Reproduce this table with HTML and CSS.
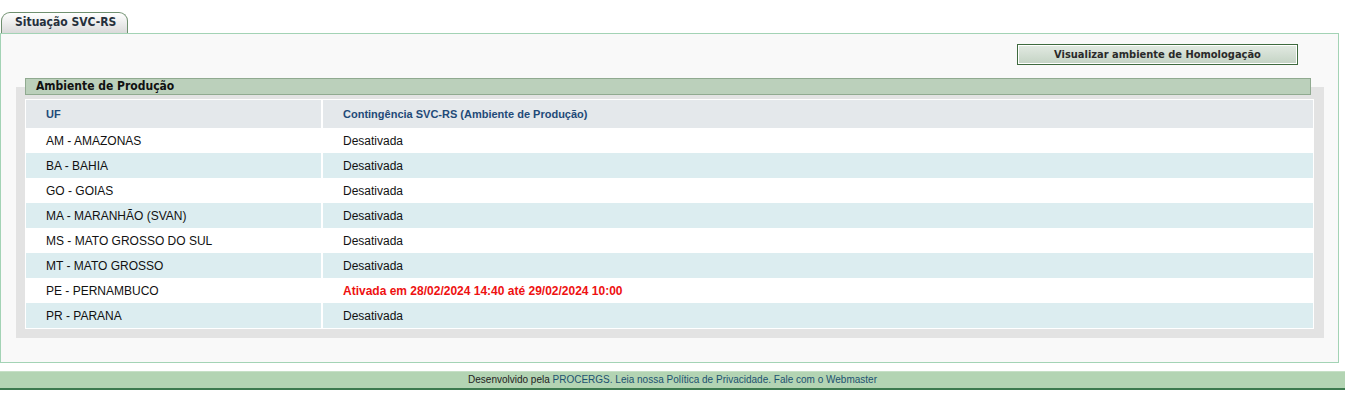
FILE: index.html
```html
<!DOCTYPE html>
<html lang="pt-BR">
<head>
<meta charset="utf-8">
<title>Situação SVC-RS</title>
<link rel="stylesheet" href="styles.css">
</head>
<body>
<div class="page">
  <div class="tab">Situação SVC-RS</div>
  <div class="panel">
    <div class="actions">
      <button class="btn" type="button">Visualizar ambiente de Homologação</button>
    </div>
    <div class="section">
      <div class="section-title">Ambiente de Produção</div>
      <table class="grid">
        <thead>
          <tr><th class="c1">UF</th><th>Contingência SVC-RS (Ambiente de Produção)</th></tr>
        </thead>
        <tbody>
          <tr><td class="c1">AM - AMAZONAS</td><td>Desativada</td></tr>
          <tr class="alt"><td class="c1">BA - BAHIA</td><td>Desativada</td></tr>
          <tr><td class="c1">GO - GOIAS</td><td>Desativada</td></tr>
          <tr class="alt"><td class="c1">MA - MARANHÃO (SVAN)</td><td>Desativada</td></tr>
          <tr><td class="c1">MS - MATO GROSSO DO SUL</td><td>Desativada</td></tr>
          <tr class="alt"><td class="c1">MT - MATO GROSSO</td><td>Desativada</td></tr>
          <tr><td class="c1">PE - PERNAMBUCO</td><td class="on">Ativada em 28/02/2024 14:40 até 29/02/2024 10:00</td></tr>
          <tr class="alt"><td class="c1">PR - PARANA</td><td>Desativada</td></tr>
        </tbody>
      </table>
    </div>
  </div>
</div>
<div class="footer">Desenvolvido pela <span class="lk"><a href="#">PROCERGS</a>. Leia nossa <a href="#">Política de Privacidade</a>. <a href="#">Fale com o Webmaster</a></span></div>
</body>
</html>
```

FILE: styles.css
```css
html, body {
  margin: 0;
  padding: 0;
  background: #ffffff;
}
body {
  font-family: "Liberation Sans", Arial, sans-serif;
  font-size: 12px;
  color: #000;
}
.page {
  padding-top: 12px;
}
.tab {
  display: inline-block;
  box-sizing: border-box;
  margin-left: 1px;
  width: 127px;
  height: 21px;
  padding: 0 0 0 13px;
  border: 1px solid #6f8f6f;
  border-bottom: none;
  border-radius: 9px 9px 0 0;
  background: linear-gradient(#ffffff, #dadada);
  font-family: "DejaVu Sans Condensed", "DejaVu Sans", Verdana, sans-serif;
  font-stretch: semi-condensed;
  font-weight: bold;
  font-size: 12px;
  line-height: 19px;
  color: #26303c;
  vertical-align: bottom;
}
.panel {
  width: 1337px;
  height: 328px;
  border: 1px solid #a3d3b5;
  background: #f9f9f9;
}
.actions {
  display: flex;
  justify-content: flex-end;
  margin: 10px 40px 0 0;
}
.btn {
  box-sizing: border-box;
  width: 281px;
  height: 21px;
  padding: 0;
  border: 1px solid #3e6a3e;
  box-shadow: inset 0 0 0 1px #ffffff;
  background: linear-gradient(#e2eae2, #c4d3c4);
  font-family: "DejaVu Sans Condensed", "DejaVu Sans", Verdana, sans-serif;
  font-stretch: semi-condensed;
  font-weight: bold;
  font-size: 11px;
  color: #2a2a2a;
  cursor: pointer;
}
.section {
  margin: 22px 14px 0 15px;
  padding: 0 10px 9px 9px;
  background: #e3e3e3;
}
.section-title {
  box-sizing: border-box;
  position: relative;
  top: -9px;
  margin: 0 3px -9px 0;
  height: 17px;
  padding-left: 10px;
  border: 1px solid #90aa90;
  background: #bbd0bb;
  font-family: "DejaVu Sans Condensed", "DejaVu Sans", Verdana, sans-serif;
  font-stretch: semi-condensed;
  font-weight: bold;
  font-size: 12px;
  line-height: 15px;
  color: #111;
}
.grid {
  width: 100%;
  margin-top: 4px;
  border-collapse: collapse;
  border: 1px solid #ffffff;
  background: #ffffff;
}
.grid th {
  height: 28px;
  padding: 0 0 0 20px;
  text-align: left;
  font-weight: bold;
  font-size: 11px;
  color: #1f4a78;
  background: #e4e8eb;
}
.grid td {
  height: 25px;
  padding: 0 0 0 20px;
  font-size: 12px;
  color: #111;
}
.grid .c1 {
  width: 275px;
  border-right: 2px solid #ffffff;
}
.grid tr.alt td {
  background: #dcedf0;
}
.grid td.on {
  color: #ee1111;
  font-weight: bold;
}
.footer {
  margin-top: 8px;
  height: 16px;
  border-top: 1px solid #c6e0c6;
  border-bottom: 2px solid #3d7a4f;
  background: #b3d4b3;
  text-align: center;
  font-size: 10px;
  line-height: 16px;
  color: #222;
}
.footer a, .footer .lk {
  color: #1c5270;
  text-decoration: none;
}
```
